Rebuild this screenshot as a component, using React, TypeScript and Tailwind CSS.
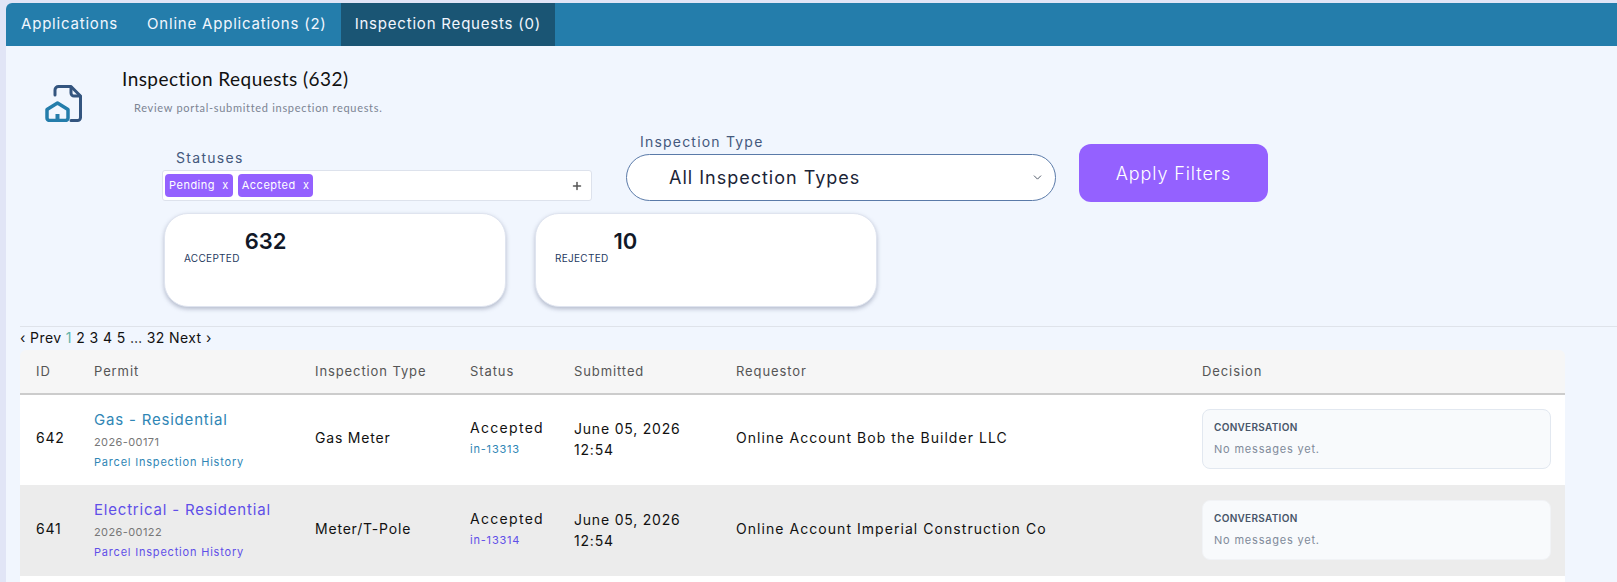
import { ChevronDown, Plus } from 'lucide-react'

const rows = [
  {
    id: '642',
    permit: 'Gas - Residential',
    number: '2026-00171',
    type: 'Gas Meter',
    ref: 'in-13313',
    requestor: 'Online Account Bob the Builder LLC',
    rowClass: 'bg-white',
    linkClass: 'text-[#2f86b5]',
    boxClass: 'border-[#e2e8f0]',
  },
  {
    id: '641',
    permit: 'Electrical - Residential',
    number: '2026-00122',
    type: 'Meter/T-Pole',
    ref: 'in-13314',
    requestor: 'Online Account Imperial Construction Co',
    rowClass: 'bg-[#ececec]',
    linkClass: 'text-[#5f4fe8]',
    boxClass: 'border-[#f1f3f6]',
  },
]

function DocHomeIcon() {
  return (
    <svg viewBox="0 0 37 37" className="w-[37px] h-[37px]" fill="none" strokeWidth="3" strokeLinecap="round" strokeLinejoin="round">
      <path d="M10 10V5a3.5 3.5 0 0 1 3.5-3.5H26L35.5 11v21.5a3 3 0 0 1-3 3H26" stroke="#34557f" />
      <path d="M26 2v6a3 3 0 0 0 3 3h6" stroke="#34557f" />
      <path d="M2 24.5 12.5 18 23 24.5V33a2.5 2.5 0 0 1-2.5 2.5h-16A2.5 2.5 0 0 1 2 33Z" stroke="#247dab" strokeWidth="3.5" />
      <path d="M12.5 35v-6" stroke="#247dab" strokeWidth="4" strokeLinecap="butt" />
    </svg>
  )
}

function Tag({ label }: { label: string }) {
  return (
    <span className="flex items-center h-[23px] px-[4px] rounded-[4px] bg-[#9461ff] text-white text-[11px] tracking-[0.5px]">
      {label}&nbsp;&nbsp;x
    </span>
  )
}

function StatCard({ label, value }: { label: string; value: string }) {
  return (
    <div className="w-[342px] h-[94px] rounded-[24px] bg-white border border-[#dfe4ef] shadow-[0_2px_4px_rgba(90,100,130,0.4)] pl-[19px] pt-[13px] flex items-start">
      <span className="mt-[24px] text-[10px] leading-[14px] tracking-[0.3px] text-[#1f3a5f]">{label}</span>
      <span className="ml-[5px] text-[22px] leading-[28px] font-semibold text-[#111827]">{value}</span>
    </div>
  )
}

export default function App() {
  return (
    <div className="h-[582px] overflow-hidden bg-[#e1e5f6] pl-[6px] pt-[3px] font-['Inter',sans-serif]">
      <div className="h-full bg-[#f1f6fe] rounded-tl-[6px] overflow-hidden">
        <nav className="flex h-[43px] bg-[#247dab] text-[15px] tracking-[0.8px] text-[#f1f6fe]">
          <a className="flex items-center pl-[15px] pr-[14px]">Applications</a>
          <a className="flex items-center pl-[15px] pr-[14px]">Online Applications (2)</a>
          <a className="flex items-center px-[14px] bg-[#1a5574]">Inspection Requests (0)</a>
        </nav>

        <div className="flex">
          <div className="ml-[39px] mt-[39px]">
            <DocHomeIcon />
          </div>
          <div className="ml-[40px] mt-[21px]">
            <h1 className="font-['Lato',sans-serif] text-[19px] leading-[24px] text-[#111] tracking-[0.45px]">Inspection Requests (632)</h1>
            <p className="ml-[12px] mt-[10px] font-['Lato',sans-serif] text-[11px] leading-[14px] tracking-[0.7px] text-[#7c8493]">
              Review portal-submitted inspection requests.
            </p>
          </div>
        </div>

        <div className="flex items-start ml-[156px] mt-[10px]">
          <div className="w-[430px] mt-[16px]">
            <label className="block ml-[14px] text-[14px] leading-[20px] tracking-[1.3px] text-[#44597d]">Statuses</label>
            <div className="flex items-center gap-[5px] h-[31px] mt-[2px] pl-[2px] pr-[8px] bg-white border border-[#dde2ec] rounded-[3px]">
              <Tag label="Pending" />
              <Tag label="Accepted" />
              <Plus className="ml-auto w-[12px] h-[12px] text-[#555]" strokeWidth={3} />
            </div>
          </div>
          <div className="ml-[34px] w-[430px]">
            <label className="block ml-[14px] text-[14px] leading-[20px] tracking-[1.2px] text-[#44597d]">Inspection Type</label>
            <div className="flex items-center h-[47px] mt-[2px] pl-[42px] pr-[11px] bg-white border border-[#5a7aa8] rounded-full text-[18px] tracking-[1px] text-[#1b2437]">
              All Inspection Types
              <ChevronDown className="ml-auto w-[13px] h-[13px] text-[#4b5563]" strokeWidth={1.75} />
            </div>
          </div>
          <button className="ml-[23px] mt-[12px] w-[189px] h-[58px] rounded-[12px] bg-[#9461ff] text-white text-[18px] font-light tracking-[0.9px]">
            Apply Filters
          </button>
        </div>

        <div className="flex gap-[29px] ml-[158px] mt-[11px]">
          <StatCard label="ACCEPTED" value="632" />
          <StatCard label="REJECTED" value="10" />
        </div>

        <div className="ml-[14px] mt-[19px] border-t border-[#dfe3ea] pt-[1px]">
          <div className="text-[14px] leading-[20px] tracking-[0.4px] text-[#111]">
            ‹ Prev <span className="text-[#5fb3a8]">1</span> 2 3 4 5 … 32 Next ›
          </div>

          <table className="w-[1545px] table-fixed border-collapse mt-[2px]">
            <colgroup>
              <col className="w-[74px]" />
              <col className="w-[221px]" />
              <col className="w-[155px]" />
              <col className="w-[104px]" />
              <col className="w-[162px]" />
              <col className="w-[466px]" />
              <col />
            </colgroup>
            <thead>
              <tr className="h-[44px] bg-[#f6f6f6] border-b-2 border-[#cccccc] text-left text-[13px] tracking-[0.9px] text-[#555]">
                <th className="pl-[16px] font-normal rounded-tl-[6px]">ID</th>
                <th className="font-normal">Permit</th>
                <th className="font-normal">Inspection Type</th>
                <th className="font-normal">Status</th>
                <th className="font-normal">Submitted</th>
                <th className="font-normal">Requestor</th>
                <th className="font-normal rounded-tr-[6px]">Decision</th>
              </tr>
            </thead>
            <tbody>
              {rows.map((row) => (
                <tr key={row.id} className={`h-[91px] ${row.rowClass} text-[14px] tracking-[0.8px] text-[#111]`}>
                  <td className="pl-[16px] pb-[5px]">{row.id}</td>
                  <td>
                    <div className={`text-[15px] leading-[20px] ${row.linkClass}`}>{row.permit}</div>
                    <div className="mt-[3px] text-[11px] leading-[18px] tracking-[0.4px] text-[#777]">{row.number}</div>
                    <div className={`mt-[2px] text-[11px] leading-[18px] ${row.linkClass}`}>Parcel Inspection History</div>
                  </td>
                  <td className="pb-[5px]">{row.type}</td>
                  <td className="pb-[5px]">
                    <div className="leading-[20px] tracking-[1.3px]">Accepted</div>
                    <div className={`mt-[3px] text-[11px] leading-[16px] ${row.linkClass}`}>{row.ref}</div>
                  </td>
                  <td className="pb-[2px] leading-[21px]">
                    June 05, 2026
                    <br />
                    12:54
                  </td>
                  <td className="pb-[5px] tracking-[1.05px]">{row.requestor}</td>
                  <td className="pb-[2px]">
                    <div className={`w-[349px] h-[60px] rounded-[8px] border ${row.boxClass} bg-[#f8fafc] px-[11px] pt-[9px]`}>
                      <div className="text-[10px] leading-[16px] font-semibold tracking-[0.3px] text-[#475569]">CONVERSATION</div>
                      <div className="mt-[6px] text-[11px] leading-[16px] text-[#808a9a]">No messages yet.</div>
                    </div>
                  </td>
                </tr>
              ))}
            </tbody>
          </table>
          <div className="w-[1545px] h-[20px] bg-white" />
        </div>
      </div>
    </div>
  )
}
